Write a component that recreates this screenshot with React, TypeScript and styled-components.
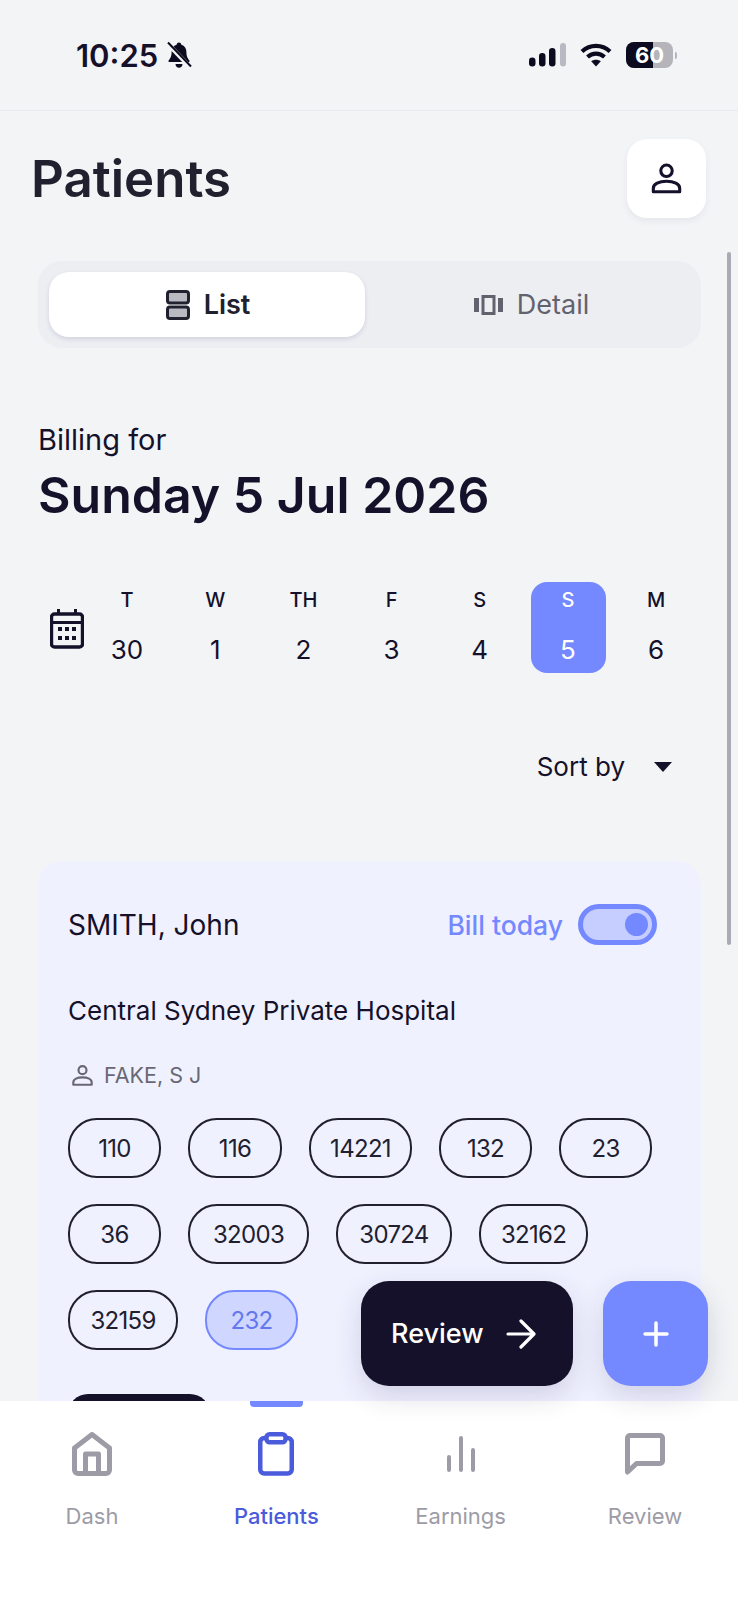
import React from "react";
import styled, { createGlobalStyle } from "styled-components";

const GlobalStyle = createGlobalStyle`
    html, body {
        margin: 0;
        padding: 0;
        background: #f3f4f6;
    }
    * {
        box-sizing: border-box;
    }
`;

const Phone = styled.div`
    position: relative;
    width: 738px;
    height: 1600px;
    display: flex;
    flex-direction: column;
    overflow: hidden;
    background: #f3f4f6;
    color: #15112a;
    font-family: "Inter", "Liberation Sans", sans-serif;
`;

const StatusBar = styled.div`
    flex: none;
    height: 111px;
    padding: 0 61px 0 76px;
    display: flex;
    align-items: center;
    justify-content: space-between;
    border-bottom: 1px solid #e9eaee;
`;

const ClockGroup = styled.div`
    display: flex;
    align-items: center;
    gap: 8px;
`;

const SystemIcons = styled.div`
    display: flex;
    align-items: center;
    gap: 14px;
`;

const Clock = styled.span`
    font-size: 31px;
    font-weight: 600;
`;

const Main = styled.main`
    flex: 1;
    min-height: 0;
    overflow: hidden;
`;

const Header = styled.header`
    display: flex;
    align-items: center;
    justify-content: space-between;
    padding: 28px 32px 0 31px;
`;

const Title = styled.h1`
    margin: 0;
    font-size: 51px;
    font-weight: 600;
    color: #20202f;
`;

const ProfileButton = styled.button`
    width: 79px;
    height: 79px;
    border: 0;
    border-radius: 20px;
    background: #fff;
    box-shadow: 0 3px 6px rgba(60, 60, 110, 0.07);
    display: flex;
    align-items: center;
    justify-content: center;
    padding: 0;
    color: #15112a;
`;

const Segment = styled.div`
    margin: 43px 37px 0 38px;
    height: 87px;
    padding: 11px;
    border-radius: 24px;
    background: #edeef2;
    display: grid;
    grid-template-columns: 316px 1fr;
`;

const SegmentTab = styled.div<{ $active?: boolean }>`
    display: flex;
    align-items: center;
    justify-content: center;
    gap: 14px;
    border-radius: 20px;
    font-size: 27px;
    font-weight: ${(p) => (p.$active ? 600 : 400)};
    color: ${(p) => (p.$active ? "#20202f" : "#62626f")};
    background: ${(p) => (p.$active ? "#fff" : "transparent")};
    padding-left: ${(p) => (p.$active ? 2 : 8)}px;
    box-shadow: ${(p) => (p.$active ? "0 2px 4px rgba(70, 70, 130, 0.16)" : "none")};
`;

const Billing = styled.section`
    margin: 74px 38px 0;
`;

const BillingLabel = styled.div`
    font-size: 29px;
    line-height: 36px;
`;

const BillingDate = styled.div`
    margin-top: 7px;
    font-size: 50px;
    line-height: 60px;
    font-weight: 600;
`;

const DayStrip = styled.div`
    margin-top: 57px;
    padding-left: 50px;
    display: flex;
    align-items: center;
`;

const CalendarSlot = styled.div`
    width: 40px;
    display: flex;
    margin-top: 2px;
`;

const DayGrid = styled.div`
    display: grid;
    grid-template-columns: repeat(7, 75px);
    column-gap: 13.2px;
`;

const Day = styled.div<{ $selected?: boolean }>`
    height: 91px;
    border-radius: 16px;
    display: flex;
    flex-direction: column;
    align-items: center;
    padding: 5px 1px 0 0;
    background: ${(p) => (p.$selected ? "#7488ff" : "transparent")};
    color: ${(p) => (p.$selected ? "#fff" : "#15112a")};
`;

const DayLetter = styled.span`
    font-size: 20px;
    line-height: 26px;
    font-weight: 500;
`;

const DayNumber = styled.span`
    margin-top: 21px;
    font-size: 26px;
    line-height: 32px;
`;

const SortRow = styled.div`
    margin-top: 76px;
    padding-right: 66px;
    display: flex;
    justify-content: flex-end;
    align-items: center;
    gap: 29px;
    font-size: 26px;
    line-height: 36px;
`;

const SortCaret = styled.span`
    width: 0;
    height: 0;
    border-left: 9px solid transparent;
    border-right: 9px solid transparent;
    border-top: 10px solid #15112a;
`;

const Card = styled.article`
    margin: 76px 37px 0 38px;
    height: 700px;
    padding: 43px 30px 40px 30px;
    border-radius: 24px;
    background: #f0f1ff;
`;

const CardTop = styled.div`
    display: flex;
    align-items: center;
    justify-content: space-between;
    padding-right: 14px;
    height: 41px;
`;

const PatientName = styled.div`
    font-size: 28px;
`;

const BillToggle = styled.div`
    display: flex;
    align-items: center;
    gap: 15px;
    font-size: 26.500px;
    font-weight: 500;
    color: #7488ff;
`;

const ToggleTrack = styled.div`
    width: 79px;
    height: 41px;
    border: 5px solid #7488ff;
    border-radius: 21px;
    background: #c6cdff;
    display: flex;
    align-items: center;
    justify-content: flex-end;
    padding-right: 4px;
`;

const ToggleKnob = styled.div`
    width: 23px;
    height: 23px;
    border-radius: 50%;
    background: #7488ff;
`;

const Hospital = styled.div`
    margin-top: 48px;
    font-size: 26px;
    line-height: 36px;
`;

const Referrer = styled.div`
    margin-top: 31px;
    display: flex;
    align-items: center;
    gap: 10px;
    padding-left: 3px;
    font-size: 21.500px;
    line-height: 30px;
    color: #686875;
`;

const ChipWrap = styled.div`
    margin-top: 28px;
    display: flex;
    flex-wrap: wrap;
    gap: 26px 27px;
    max-width: 590px;
`;

const Chip = styled.div<{ $active?: boolean; $width: number }>`
    width: ${(p) => p.$width}px;
    height: 60px;
    border-radius: 29px;
    border: 2px solid ${(p) => (p.$active ? "#7488ff" : "#20202f")};
    background: ${(p) => (p.$active ? "#cfd6ff" : "transparent")};
    color: ${(p) => (p.$active ? "#6377ef" : "#20202f")};
    display: flex;
    align-items: center;
    justify-content: center;
    font-size: 24px;
    letter-spacing: -0.7px;
`;

const DarkPill = styled.div`
    margin-top: 44px;
    width: 142px;
    height: 60px;
    border-radius: 20px;
    background: #15112a;
`;

const FabRow = styled.div`
    position: absolute;
    left: 361px;
    top: 1281px;
    z-index: 3;
    display: flex;
    gap: 30px;
`;

const ReviewFab = styled.button`
    width: 212px;
    height: 105px;
    border: 0;
    padding: 0 0 0 30px;
    border-radius: 28px;
    background: #15112a;
    color: #fff;
    font: inherit;
    font-size: 27px;
    font-weight: 500;
    display: flex;
    align-items: center;
    gap: 22px;
    box-shadow: 0 10px 28px rgba(40, 40, 90, 0.16);
`;

const AddFab = styled.button`
    width: 105px;
    height: 105px;
    border: 0;
    padding: 0;
    border-radius: 28px;
    background: #7488ff;
    color: #fff;
    display: flex;
    align-items: center;
    justify-content: center;
    box-shadow: 0 10px 28px rgba(40, 40, 90, 0.16);
`;

const Scrollbar = styled.div`
    position: absolute;
    left: 727px;
    top: 252px;
    width: 4px;
    height: 693px;
    border-radius: 2px;
    background: #a9aab3;
`;

const TabBar = styled.nav`
    position: relative;
    flex: none;
    height: 199px;
    background: #fff;
    padding: 30px 47px 0 46px;
    display: grid;
    grid-template-columns: 92px 92px 92px 92px;
    justify-content: space-between;
`;

const TabItem = styled.div<{ $active?: boolean }>`
    position: relative;
    display: flex;
    flex-direction: column;
    align-items: center;
    font-size: 22px;
    color: ${(p) => (p.$active ? "#4a5bdc" : "#9d9ca6")};
    font-weight: ${(p) => (p.$active ? 500 : 400)};
`;

const TabIcon = styled.div`
    height: 46px;
    display: flex;
    align-items: center;
    justify-content: center;
`;

const TabLabel = styled.span`
    margin-top: 24px;
    line-height: 30px;
    white-space: nowrap;
`;

const TabMarker = styled.span`
    position: absolute;
    top: -30px;
    left: 50%;
    width: 53px;
    height: 6px;
    margin-left: -26px;
    border-radius: 0 0 4px 4px;
    background: #7488ff;
`;

const BatteryGroup = styled.div`
    display: flex;
    align-items: center;
`;

const BatteryShell = styled.div`
    position: relative;
    width: 47px;
    height: 26px;
    border-radius: 8px;
    overflow: hidden;
    background: #b4b4ba;
    display: flex;
    align-items: center;
    justify-content: center;
    color: #fff;
    font-size: 22px;
    font-weight: 700;
`;

const BatteryFill = styled.span`
    position: absolute;
    left: 0;
    top: 0;
    bottom: 0;
    background: #0c0a1e;
`;

const BatteryText = styled.span`
    position: relative;
`;

const BatteryTip = styled.span`
    width: 2px;
    height: 7px;
    margin-left: 2px;
    border-radius: 0 2px 2px 0;
    background: #b4b4ba;
`;

const PersonIcon: React.FC<{ size: number }> = ({ size }) => (
    <svg width={size} height={size} viewBox="0 0 30 30" fill="none" stroke="currentColor" strokeWidth="2.800">
        <circle cx="15" cy="8" r="5.200" />
        <path d="M3 27v-3c0-4 5.300-6.500 12-6.500s12 2.500 12 6.500v3z" strokeLinejoin="round" />
    </svg>
);

const ListIcon = () => (
    <svg width="24" height="30" viewBox="0 0 24 30">
        <rect x="1.500" y="1.500" width="21" height="11.500" rx="2.500" fill="#b9b9c2" stroke="#20202f" strokeWidth="3" />
        <rect x="1.500" y="17" width="21" height="11.500" rx="2.500" fill="#b9b9c2" stroke="#20202f" strokeWidth="3" />
    </svg>
);

const CarouselIcon = () => (
    <svg width="29" height="20" viewBox="0 0 29 20" fill="#62626f">
        <rect x="0" y="3" width="5" height="14" />
        <path d="M7.500 0h14v20h-14zM10.500 3v14h8V3z" fillRule="evenodd" />
        <rect x="24" y="3" width="5" height="14" />
    </svg>
);

const CalendarIcon = () => (
    <svg width="34" height="40" viewBox="0 0 34 40" fill="none">
        <rect x="1.500" y="5" width="31" height="33" rx="3" stroke="#15112a" strokeWidth="3.400" />
        <path d="M2 13.500h30" stroke="#15112a" strokeWidth="3" />
        <path d="M8.500 0v6M25.500 0v6" stroke="#15112a" strokeWidth="3" />
        <g fill="#15112a">
            <rect x="8" y="18" width="4" height="4" />
            <rect x="15" y="18" width="4" height="4" />
            <rect x="22" y="18" width="4" height="4" />
            <rect x="8" y="27" width="4" height="4" />
            <rect x="15" y="27" width="4" height="4" />
            <rect x="22" y="27" width="4" height="4" />
        </g>
    </svg>
);

const HomeIcon = () => (
    <svg width="40" height="44" viewBox="0 0 40 44" fill="none" stroke="currentColor" strokeWidth="5" strokeLinejoin="round">
        <path d="M2.500 16 20 2.500 37.500 16v22a3.500 3.500 0 0 1-3.500 3.500H6A3.500 3.500 0 0 1 2.500 38z" />
        <path d="M13.500 41V22h13v19" />
    </svg>
);

const ClipboardIcon = () => (
    <svg width="36" height="44" viewBox="0 0 36 44" fill="none" stroke="currentColor" strokeWidth="4.500" strokeLinejoin="round">
        <rect x="2.250" y="6" width="31.500" height="35.500" rx="4" />
        <rect x="8.500" y="2.250" width="19" height="8" rx="3" fill="#fff" />
    </svg>
);

const BarsIcon = () => (
    <svg width="30" height="36" viewBox="0 0 30 36" fill="none" stroke="currentColor" strokeWidth="4" strokeLinecap="round">
        <path d="M3 34V21M15 34V2M27 34V14" />
    </svg>
);

const BubbleIcon = () => (
    <svg width="40" height="42" viewBox="0 0 40 42" fill="none" stroke="currentColor" strokeWidth="5" strokeLinejoin="round">
        <path d="M2.500 5A2.500 2.500 0 0 1 5 2.500h30A2.500 2.500 0 0 1 37.500 5v23a2.500 2.500 0 0 1-2.500 2.500H11.500l-9 8.500z" />
    </svg>
);

const SignalIcon = () => (
    <svg width="37" height="24" viewBox="0 0 37 24">
        <rect x="0" y="14.500" width="6.500" height="9" rx="3.200" fill="#0c0a1e" />
        <rect x="10" y="10" width="6.500" height="13.500" rx="3.200" fill="#0c0a1e" />
        <rect x="20" y="5" width="6.500" height="18.500" rx="3.200" fill="#0c0a1e" />
        <rect x="31" y="0" width="6" height="23.500" rx="3" fill="#b9bac1" />
    </svg>
);

const WifiIcon = () => (
    <svg width="32" height="24" viewBox="0 0 32 24" fill="none" stroke="#0c0a1e" strokeWidth="4.200">
        <path d="M2 8.500C10 1 22 1 30 8.500" />
        <path d="M7.500 14c5-4.500 12-4.500 17 0" />
        <path d="M16 23.500l-4.800-5.200c2.800-2 6.800-2 9.600 0z" fill="#0c0a1e" stroke="none" />
    </svg>
);

const BellOffIcon = () => (
    <svg width="26" height="28" viewBox="0 0 26 28" fill="#0c0a1e">
        <path d="M13 1.500c1.500 0 2.300 1 2.400 2.300 3.300 1 5 3.800 5 7.200 0 4.500 1.400 6.500 3 8.500v1.500H2.600V19.500c1.600-2 3-4 3-8.500 0-3.400 1.700-6.200 5-7.200.1-1.300.9-2.300 2.400-2.300z" />
        <path d="M9.500 23h7c0 2.200-1.500 3.700-3.500 3.700S9.500 25.200 9.500 23z" />
        <path d="M2 3l22 23" stroke="#f3f4f6" strokeWidth="4.500" />
        <path d="M2 1.500l23 24" stroke="#0c0a1e" strokeWidth="2" />
    </svg>
);

const days = [
    { letter: "T", num: "30" },
    { letter: "W", num: "1" },
    { letter: "TH", num: "2" },
    { letter: "F", num: "3" },
    { letter: "S", num: "4" },
    { letter: "S", num: "5", selected: true },
    { letter: "M", num: "6" },
];

const codes = [
    { code: "110", width: 93 },
    { code: "116", width: 94 },
    { code: "14221", width: 103 },
    { code: "132", width: 93 },
    { code: "23", width: 93 },
    { code: "36", width: 93 },
    { code: "32003", width: 121 },
    { code: "30724", width: 116 },
    { code: "32162", width: 109 },
    { code: "32159", width: 110 },
    { code: "232", width: 93, active: true },
];

export default function App() {
    return (
        <>
            <GlobalStyle />
            <Phone>
                <StatusBar>
                    <ClockGroup>
                        <Clock>10:25</Clock>
                        <BellOffIcon />
                    </ClockGroup>
                    <SystemIcons>
                        <SignalIcon />
                        <WifiIcon />
                        <BatteryGroup>
                            <BatteryShell>
                                <BatteryFill style={{ width: "58%" }} />
                                <BatteryText>60</BatteryText>
                            </BatteryShell>
                            <BatteryTip />
                        </BatteryGroup>
                    </SystemIcons>
                </StatusBar>
                <Main>
                    <Header>
                        <Title>Patients</Title>
                        <ProfileButton>
                            <PersonIcon size={33} />
                        </ProfileButton>
                    </Header>
                    <Segment>
                        <SegmentTab $active>
                            <ListIcon />
                            List
                        </SegmentTab>
                        <SegmentTab>
                            <CarouselIcon />
                            Detail
                        </SegmentTab>
                    </Segment>
                    <Billing>
                        <BillingLabel>Billing for</BillingLabel>
                        <BillingDate>Sunday 5 Jul 2026</BillingDate>
                    </Billing>
                    <DayStrip>
                        <CalendarSlot>
                            <CalendarIcon />
                        </CalendarSlot>
                        <DayGrid>
                            {days.map((d) => (
                                <Day key={d.num} $selected={d.selected}>
                                    <DayLetter>{d.letter}</DayLetter>
                                    <DayNumber>{d.num}</DayNumber>
                                </Day>
                            ))}
                        </DayGrid>
                    </DayStrip>
                    <SortRow>
                        Sort by
                        <SortCaret />
                    </SortRow>
                    <Card>
                        <CardTop>
                            <PatientName>SMITH, John</PatientName>
                            <BillToggle>
                                Bill today
                                <ToggleTrack>
                                    <ToggleKnob />
                                </ToggleTrack>
                            </BillToggle>
                        </CardTop>
                        <Hospital>Central Sydney Private Hospital</Hospital>
                        <Referrer>
                            <PersonIcon size={23} />
                            FAKE, S J
                        </Referrer>
                        <ChipWrap>
                            {codes.map((c) => (
                                <Chip key={c.code} $width={c.width} $active={c.active}>
                                    {c.code}
                                </Chip>
                            ))}
                        </ChipWrap>
                        <DarkPill />
                    </Card>
                </Main>
                <TabBar>
                    <TabItem>
                        <TabIcon>
                            <HomeIcon />
                        </TabIcon>
                        <TabLabel>Dash</TabLabel>
                    </TabItem>
                    <TabItem $active>
                        <TabMarker />
                        <TabIcon>
                            <ClipboardIcon />
                        </TabIcon>
                        <TabLabel>Patients</TabLabel>
                    </TabItem>
                    <TabItem>
                        <TabIcon>
                            <BarsIcon />
                        </TabIcon>
                        <TabLabel>Earnings</TabLabel>
                    </TabItem>
                    <TabItem>
                        <TabIcon>
                            <BubbleIcon />
                        </TabIcon>
                        <TabLabel>Review</TabLabel>
                    </TabItem>
                </TabBar>
                <FabRow>
                    <ReviewFab>
                        Review
                        <svg width="30" height="30" viewBox="0 0 30 30" fill="none" stroke="#fff" strokeWidth="3.200" strokeLinecap="round" strokeLinejoin="round">
                            <path d="M2 15h25M15 2l13 13-13 13" />
                        </svg>
                    </ReviewFab>
                    <AddFab>
                        <svg width="26" height="26" viewBox="0 0 26 26" fill="none" stroke="#fff" strokeWidth="3.500" strokeLinecap="round">
                            <path d="M13 2v22M2 13h22" />
                        </svg>
                    </AddFab>
                </FabRow>
                <Scrollbar />
            </Phone>
        </>
    );
}
